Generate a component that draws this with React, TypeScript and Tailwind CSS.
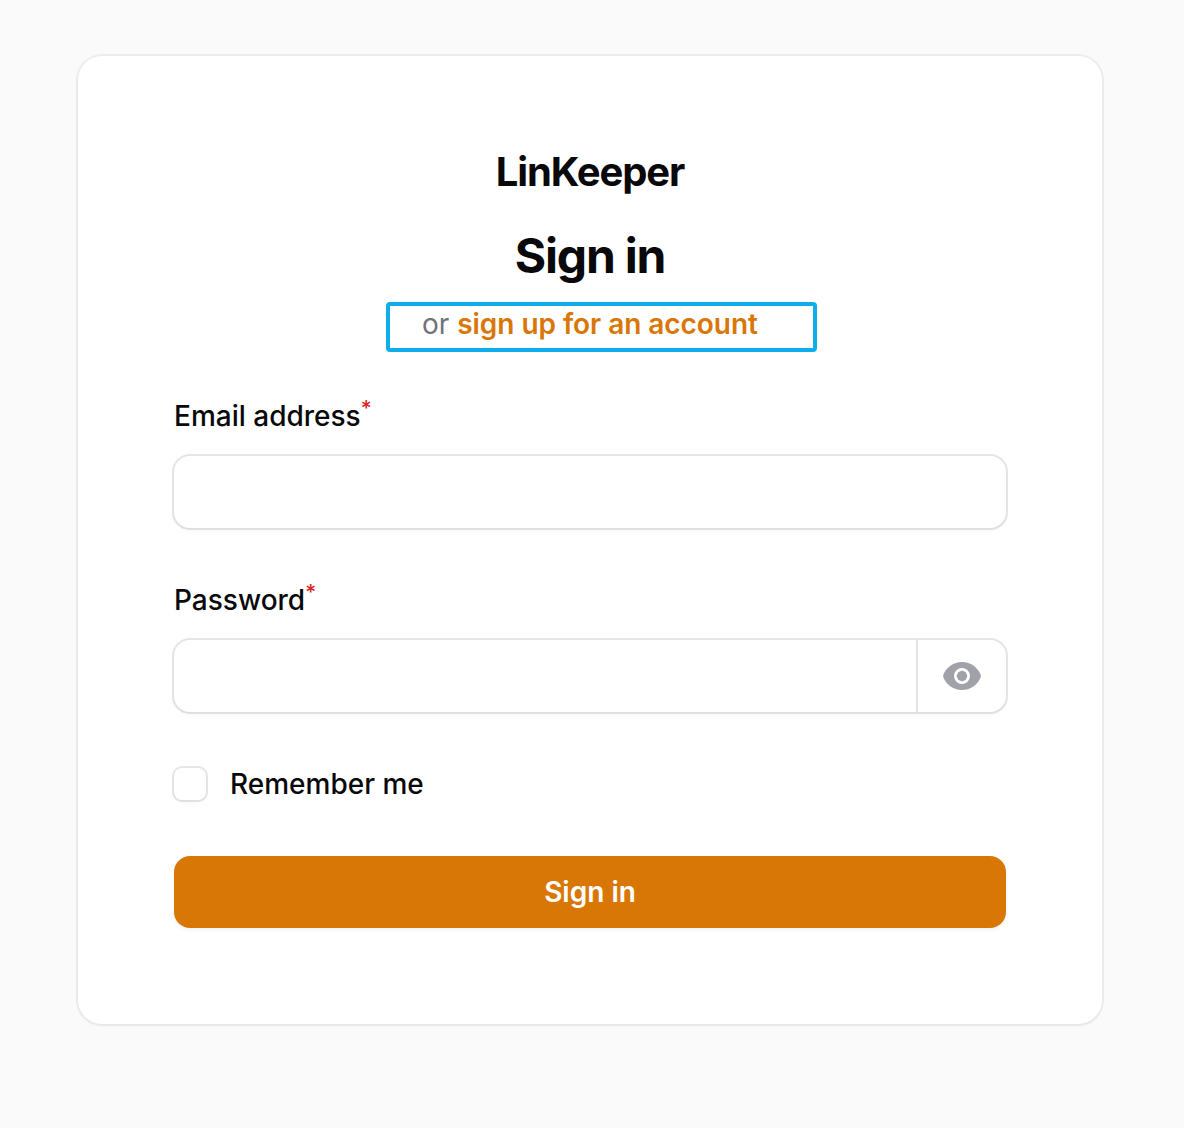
import React from "react";

function Label({ text, htmlFor }: { text: string; htmlFor: string }) {
  return (
    <label htmlFor={htmlFor} className="flex h-12 items-center text-[28px] leading-[48px] font-medium text-[#09090b]">
      <span>{text}</span>
      <span className="-mt-4 text-[21px] leading-none text-[#dc2626]">*</span>
    </label>
  );
}

function EyeIcon() {
  return (
    <svg viewBox="0 0 20 20" className="h-10 w-10" fill="#a1a1aa">
      <path d="M10 7.3 11.9 8.1 12.7 10 11.9 11.9 10 12.7 8.1 11.9 7.3 10 8.1 8.1Z" />
      <path
        fillRule="evenodd"
        clipRule="evenodd"
        d="M.664 10.59a1.651 1.651 0 0 1 0-1.186A10.004 10.004 0 0 1 10 3c4.257 0 7.893 2.66 9.336 6.41.147.381.146.804 0 1.186A10.004 10.004 0 0 1 10 17c-4.257 0-7.893-2.66-9.336-6.41ZM14 10a4 4 0 1 1-8 0 4 4 0 0 1 8 0Z"
      />
    </svg>
  );
}

export default function App() {
  return (
    <main className="h-[1128px] w-[1184px] bg-[#fafafa] pt-14 pl-[78px] font-['Inter',sans-serif]">
      <section className="h-[968px] w-[1024px] rounded-[24px] bg-white px-24 pt-24 shadow-[0_2px_4px_rgba(0,0,0,0.03)] ring-2 ring-[#09090b]/5">
        <header className="flex flex-col items-center">
          <div className="h-10 text-[40px] leading-10 font-bold tracking-[-1.12px] text-[#09090b]">LinKeeper</div>
          <h1 className="mt-8 h-16 text-[48px] leading-16 font-bold tracking-[-1.2px] text-[#09090b]">Sign in</h1>
          <div className="mt-[14px] ml-[23px] h-[50px] w-[431px] rounded-[4px] border-4 border-[#0eaeea] pl-8 text-[28px] leading-[36px] whitespace-nowrap text-[#71717a]">
            or <a className="font-semibold tracking-[-0.05px] text-[#d97706]">sign up for an account</a>
          </div>
        </header>
        <form className="mt-10">
          <Label text="Email address" htmlFor="email" />
          <input
            id="email"
            type="email"
            className="mt-4 block h-[72px] w-full rounded-[16px] bg-white px-6 text-[28px] shadow-[0_2px_4px_rgba(0,0,0,0.04)] ring-2 ring-[#09090b]/10 outline-none"
          />
          <div className="mt-12">
            <Label text="Password" htmlFor="password" />
          </div>
          <div className="mt-4 flex h-[72px] rounded-[16px] bg-white shadow-[0_2px_4px_rgba(0,0,0,0.04)] ring-2 ring-[#09090b]/10">
            <input id="password" type="password" className="min-w-0 flex-1 rounded-l-[16px] px-6 text-[28px] outline-none" />
            <button type="button" aria-label="Show password" className="flex w-[90px] items-center justify-center border-l-2 border-[#e4e4e7]">
              <EyeIcon />
            </button>
          </div>
          <label className="mt-12 flex h-12 items-center gap-6">
            <input type="checkbox" className="h-8 w-8 appearance-none rounded-[8px] shadow-[0_2px_4px_rgba(0,0,0,0.04)] ring-2 ring-[#09090b]/10" />
            <span className="text-[28px] font-medium text-[#09090b]">Remember me</span>
          </label>
          <button
            type="button"
            className="mt-12 h-[72px] w-full rounded-[16px] bg-[#d97706] text-[28px] font-semibold text-white shadow-[0_2px_4px_rgba(0,0,0,0.05)]"
          >
            Sign in
          </button>
        </form>
      </section>
    </main>
  );
}
